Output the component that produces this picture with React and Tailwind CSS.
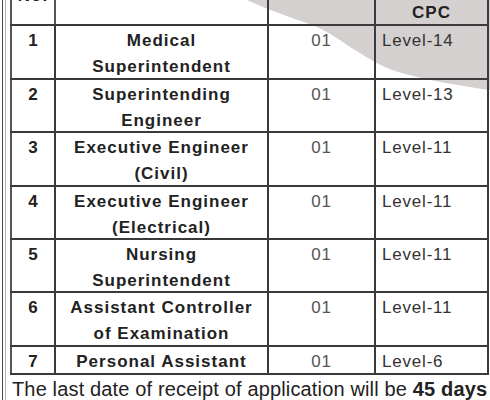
import React from "react";

const rows = [
  { n: "1", post: ["Medical", "Superintendent"], h: "h-[54px]", level: "Level-14" },
  { n: "2", post: ["Superintending", "Engineer"], h: "h-[53px]", level: "Level-13" },
  { n: "3", post: ["Executive Engineer", "(Civil)"], h: "h-[54px]", level: "Level-11" },
  { n: "4", post: ["Executive Engineer", "(Electrical)"], h: "h-[53px]", level: "Level-11" },
  { n: "5", post: ["Nursing", "Superintendent"], h: "h-[53px]", level: "Level-11" },
  { n: "6", post: ["Assistant Controller", "of Examination"], h: "h-[54px]", level: "Level-11" },
  { n: "7", post: ["Personal Assistant"], h: "h-[28px]", level: "Level-6" },
];

export default function App() {
  return (
    <div className="relative w-[490px] h-[400px] overflow-hidden bg-white font-['Liberation_Sans',Arial,sans-serif] text-[#222]">
      <svg className="absolute inset-0" width="490" height="400" viewBox="0 0 490 400">
        <path d="M247 0 C 268 10, 290 17, 312 25 C 332 33, 343 43, 355 50 C 368 58, 380 66, 395 71 C 425 80, 460 86, 490 90 L 490 0 Z" fill="#d3d0cf" />
      </svg>
      <div className="relative flex h-full">
        <div className="w-[2px]" />
        <div className="w-[1px] bg-[#4a4a4a]" />
        <div className="w-[2px]" />
        <div className="w-[1px] bg-[#b4b4b4]" />
        <div className="w-[4px]" />
        <div className="w-[479px] -mt-[34px] flex flex-col">
          <div className="flex shrink-0 h-[60px] border-b-2 border-[#3a3a3a] font-bold text-[17px] tracking-[1px]">
            <div className="w-[46px] border-x-2 border-[#555] flex flex-col justify-end items-center pb-[18px] leading-[20px]">
              <span>No.</span>
            </div>
            <div className="w-[213px] border-r-2 border-[#3a3a3a]" />
            <div className="w-[107px] border-r-2 border-[#3a3a3a]" />
            <div className="w-[113px] border-r-2 border-[#3a3a3a] flex flex-col justify-end items-center pb-[1px] leading-[20px]">
              <span>CPC</span>
            </div>
          </div>
          {rows.map((r) => (
            <div key={r.n} className={`flex shrink-0 ${r.h} border-b-2 border-[#3a3a3a] text-[17px] leading-[26px]`}>
              <div className="w-[46px] border-x-2 border-l-[#555] border-r-[#3a3a3a] pt-[2px] text-center font-bold">
                {r.n}
              </div>
              <div className="w-[213px] border-r-2 border-[#3a3a3a] pt-[2px] text-center font-bold tracking-[1px] whitespace-nowrap">
                {r.post.map((p) => (
                  <div key={p}>{p}</div>
                ))}
              </div>
              <div className="w-[107px] border-r-2 border-[#3a3a3a] pt-[2px] text-center text-[#555] tracking-[0.8px]">
                01
              </div>
              <div className="w-[113px] border-r-2 border-[#3a3a3a] pt-[2px] pl-[6px] text-[#333] tracking-[0.8px]">
                {r.level}
              </div>
            </div>
          ))}
          <p className="shrink-0 mt-[2px] pl-[2px] text-[20px] leading-[24px] tracking-[0.15px] whitespace-nowrap text-[#222]">
            The last date of receipt of application will be <b>45 days</b>
          </p>
        </div>
      </div>
    </div>
  );
}
